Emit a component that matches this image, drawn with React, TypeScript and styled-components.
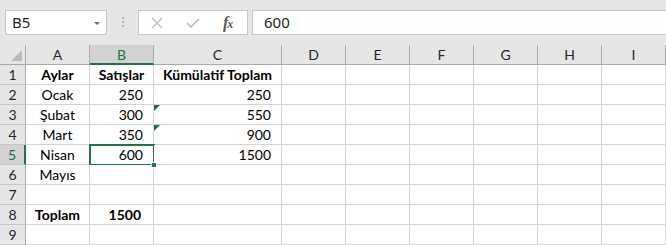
import React from "react";
import styled, { createGlobalStyle, css } from "styled-components";

const GlobalStyle = createGlobalStyle`
    html, body {
        margin: 0;
        padding: 0;
        background: #ffffff;
        overflow: hidden;
    }
`;

const Page = styled.div`
    width: 666px;
    height: 245px;
    overflow: hidden;
    font-family: Lato, "Liberation Sans", sans-serif;
`;

const Toolbar = styled.div`
    height: 45px;
    box-sizing: border-box;
    padding: 10px 0 0 5px;
    background: #e6e6e6;
    display: flex;
    align-items: flex-start;
`;

const NameBox = styled.div`
    width: 102px;
    height: 25px;
    box-sizing: border-box;
    border: 1px solid #c6c6c6;
    background: #ffffff;
    display: flex;
    align-items: center;
    justify-content: space-between;
    padding: 0 6px 1px 6px;
    font-family: "Noto Sans", "Open Sans", sans-serif;
    font-size: 15px;
    color: #262626;
`;

const DropArrow = styled.span`
    width: 0;
    height: 0;
    border-left: 3.5px solid transparent;
    border-right: 3.5px solid transparent;
    border-top: 3.5px solid #707070;
    margin-top: 2px;
`;

const Dots = styled.div`
    width: 2px;
    margin: 7px 14px 0 15px;
    display: flex;
    flex-direction: column;
    gap: 2px;
    span {
        width: 2px;
        height: 2px;
        background: #b4b4b4;
    }
`;

const FxButtons = styled.div`
    width: 110px;
    height: 25px;
    box-sizing: border-box;
    border: 1px solid #c6c6c6;
    background: #ffffff;
    display: flex;
    align-items: center;
    padding-left: 12px;
    gap: 23px;
`;

const FxLabel = styled.span`
    font-family: "Liberation Serif", serif;
    font-style: italic;
    font-weight: 700;
    font-size: 16px;
    color: #5a5a5a;
    letter-spacing: -1px;
    sub {
        font-size: 12px;
        vertical-align: 0;
    }
`;

const FormulaInput = styled.div`
    flex: 1;
    height: 25px;
    margin-left: 4px;
    box-sizing: border-box;
    border: 1px solid #c6c6c6;
    border-right: none;
    background: #fdfdfd;
    display: flex;
    align-items: center;
    padding: 0 0 1px 11px;
    font-family: "Noto Sans", "Open Sans", sans-serif;
    font-size: 15px;
    color: #262626;
`;

const Sheet = styled.div`
    display: grid;
    grid-template-columns: 26px 64px 64px 128px repeat(6, 64px);
    grid-auto-rows: 20px;
    background: #e6e6e6;
`;

const Corner = styled.div`
    position: relative;
    box-sizing: border-box;
    border-right: 1px solid #ababab;
    border-bottom: 1px solid #ababab;
    &::after {
        content: "";
        position: absolute;
        right: 3px;
        bottom: 3px;
        width: 0;
        height: 0;
        border-left: 11px solid transparent;
        border-bottom: 11px solid #b9b9b9;
    }
`;

const ColHeader = styled.div<{ $selected?: boolean }>`
    box-sizing: border-box;
    border-right: 1px solid #ababab;
    border-bottom: 1px solid #ababab;
    font-size: 14px;
    line-height: 20px;
    text-align: center;
    color: #262626;
    ${({ $selected }) =>
        $selected &&
        css`
            background: #d2d2d2;
            color: #217346;
            border-bottom: 2px solid #217346;
        `}
`;

const RowHeader = styled.div<{ $selected?: boolean }>`
    box-sizing: border-box;
    border-right: 1px solid #ababab;
    border-bottom: 1px solid #c8c8c8;
    font-size: 14px;
    line-height: 20px;
    text-align: center;
    color: #262626;
    ${({ $selected }) =>
        $selected &&
        css`
            background: #d2d2d2;
            color: #217346;
            border-right: 2px solid #217346;
        `}
`;

const Cell = styled.div<{ $align?: "left" | "center" | "right"; $bold?: boolean; $active?: boolean; $flag?: boolean }>`
    position: relative;
    box-sizing: border-box;
    background: #ffffff;
    border-right: 1px solid #d4d4d4;
    border-bottom: 1px solid #d4d4d4;
    font-size: 14px;
    line-height: 20px;
    color: #000000;
    white-space: nowrap;
    text-align: ${({ $align }) => $align || "left"};
    padding: 0 ${({ $align, $bold }) => ($align === "right" ? ($bold ? "12px" : "10px") : "3px")};
    font-weight: ${({ $bold }) => ($bold ? 700 : 400)};
    ${({ $flag }) =>
        $flag &&
        css`
            &::before {
                content: "";
                position: absolute;
                left: 0;
                top: 0;
                width: 0;
                height: 0;
                border-top: 6px solid #1e7145;
                border-right: 6px solid transparent;
            }
        `}
    ${({ $active }) =>
        $active &&
        css`
            &::after {
                content: "";
                position: absolute;
                left: -1px;
                top: -1px;
                width: 66px;
                height: 22px;
                box-sizing: border-box;
                border: 2px solid #217346;
                pointer-events: none;
            }
            & > i {
                position: absolute;
                right: -4px;
                bottom: -4px;
                width: 6px;
                height: 6px;
                background: #217346;
                border: 1px solid #ffffff;
                box-sizing: border-box;
                z-index: 2;
            }
        `}
`;

const columns = ["A", "B", "C", "D", "E", "F", "G", "H", "I"];

type CellData = { text?: string; align?: "left" | "center" | "right"; bold?: boolean; flag?: boolean; active?: boolean };

const rows: CellData[][] = [
    [{ text: "Aylar", align: "center", bold: true }, { text: "Satışlar", align: "center", bold: true }, { text: "Kümülatif Toplam", align: "center", bold: true }],
    [{ text: "Ocak", align: "center" }, { text: "250", align: "right" }, { text: "250", align: "right" }],
    [{ text: "Şubat", align: "center" }, { text: "300", align: "right" }, { text: "550", align: "right", flag: true }],
    [{ text: "Mart", align: "center" }, { text: "350", align: "right" }, { text: "900", align: "right", flag: true }],
    [{ text: "Nisan", align: "center" }, { text: "600", align: "right", active: true }, { text: "1500", align: "right" }],
    [{ text: "Mayıs", align: "center" }],
    [],
    [{ text: "Toplam", align: "center", bold: true }, { text: "1500", align: "right", bold: true }],
    [],
];

const App = () => {
    return (
        <Page>
            <GlobalStyle />
            <Toolbar>
                <NameBox>
                    B5
                    <DropArrow />
                </NameBox>
                <Dots>
                    <span />
                    <span />
                    <span />
                </Dots>
                <FxButtons>
                    <svg width="12" height="12" viewBox="0 0 12 12">
                        <path d="M1 1 L11 11 M11 1 L1 11" stroke="#bdbdbd" strokeWidth="1.3" fill="none" />
                    </svg>
                    <svg width="14" height="10" viewBox="0 0 14 10">
                        <path d="M1 5 L5 9 L13 1" stroke="#bdbdbd" strokeWidth="1.6" fill="none" />
                    </svg>
                    <FxLabel>
                        f<sub>x</sub>
                    </FxLabel>
                </FxButtons>
                <FormulaInput>600</FormulaInput>
            </Toolbar>
            <Sheet>
                <Corner />
                {columns.map((c) => (
                    <ColHeader key={c} $selected={c === "B"}>
                        {c}
                    </ColHeader>
                ))}
                {rows.map((row, r) => (
                    <React.Fragment key={r}>
                        <RowHeader $selected={r === 4}>{r + 1}</RowHeader>
                        {columns.map((c, ci) => {
                            const d = row[ci] || {};
                            return (
                                <Cell key={c} $align={d.align} $bold={d.bold} $flag={d.flag} $active={d.active}>
                                    {d.text}
                                    {d.active && <i />}
                                </Cell>
                            );
                        })}
                    </React.Fragment>
                ))}
            </Sheet>
        </Page>
    );
};

export default App;
